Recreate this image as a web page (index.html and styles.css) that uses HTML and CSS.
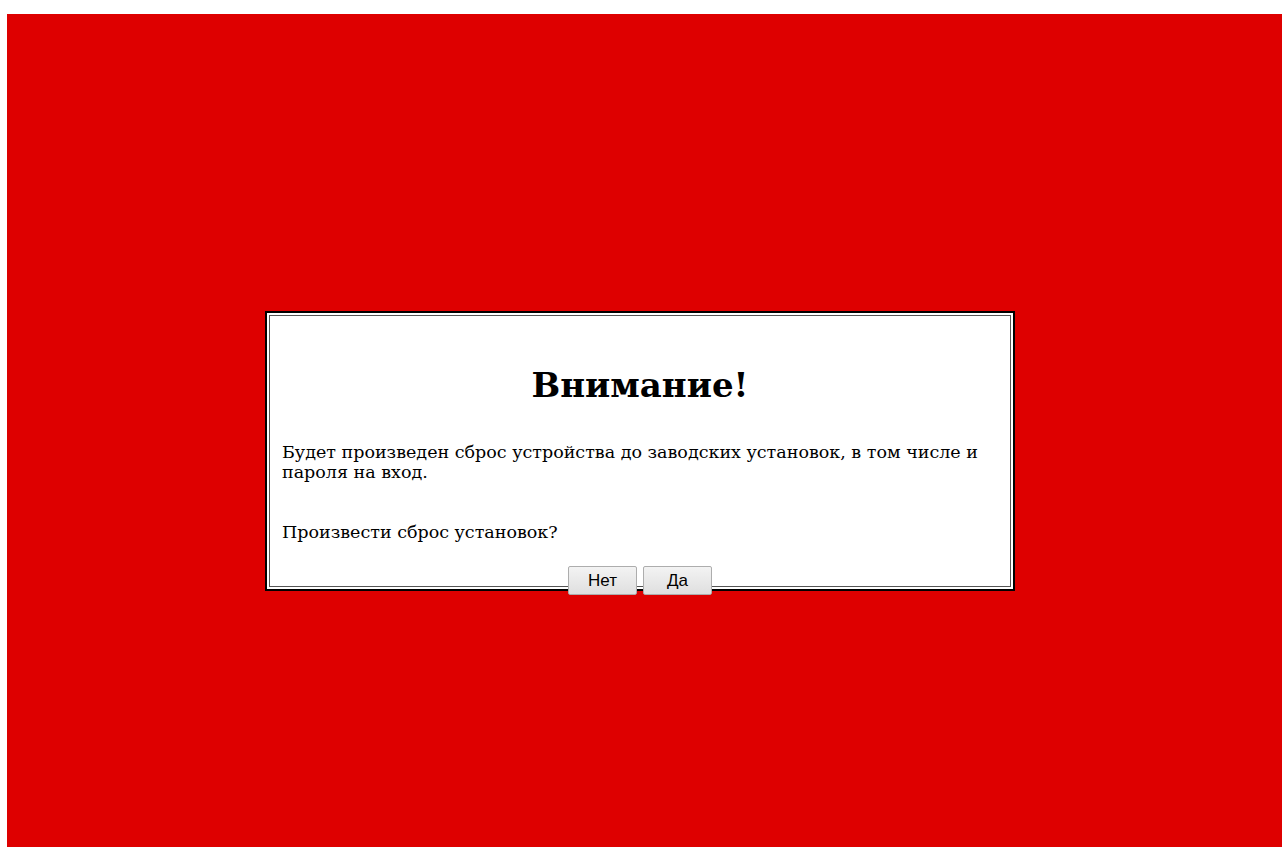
FILE: index.html
```html
<!DOCTYPE html>
<html lang="ru">
<head>
<meta charset="utf-8">
<title>Сброс установок</title>
<link rel="stylesheet" href="styles.css">
</head>
<body>
<div class="screen">
  <div class="dialog">
    <div class="dialog-inner">
      <h1 class="title">Внимание!</h1>
      <p class="msg">Будет произведен сброс устройства до заводских установок, в том числе и пароля на вход.</p>
      <p class="msg question">Произвести сброс установок?</p>
      <div class="actions">
        <button class="btn" type="button">Нет</button>
        <button class="btn" type="button">Да</button>
      </div>
    </div>
  </div>
</div>
</body>
</html>
```

FILE: styles.css
```css
html, body {
  margin: 0;
  padding: 0;
  background: #fff;
}

body {
  font-family: "DejaVu Serif", "Liberation Serif", serif;
  color: #000;
}

.screen {
  margin: 14px 0 0 7px;
  height: 833px;
  background: #de0000;
  padding: 297px 0 0 258px;
  box-sizing: border-box;
}

.dialog {
  box-sizing: border-box;
  width: 750px;
  height: 280px;
  border: 2px solid #000;
  padding: 2px;
  background: #fff;
}

.dialog-inner {
  box-sizing: border-box;
  height: 100%;
  border: 1px solid #555;
  padding: 0 12px;
}

.title {
  margin: 49px 0 0;
  font-size: 34px;
  line-height: 41px;
  font-weight: bold;
  text-align: center;
}

.msg {
  margin: 36px 0 0;
  font-size: 17.5px;
  line-height: 20px;
}

.question {
  margin-top: 40px;
}

.actions {
  display: flex;
  justify-content: center;
  gap: 6px;
  margin-top: 24px;
}

.btn {
  box-sizing: border-box;
  width: 69px;
  height: 29px;
  padding: 0;
  font-family: "Liberation Sans", Arial, sans-serif;
  font-size: 17px;
  color: #000;
  border: 1px solid #adadad;
  border-radius: 2px;
  background: linear-gradient(#f3f3f3, #dfdfdf);
}
```
